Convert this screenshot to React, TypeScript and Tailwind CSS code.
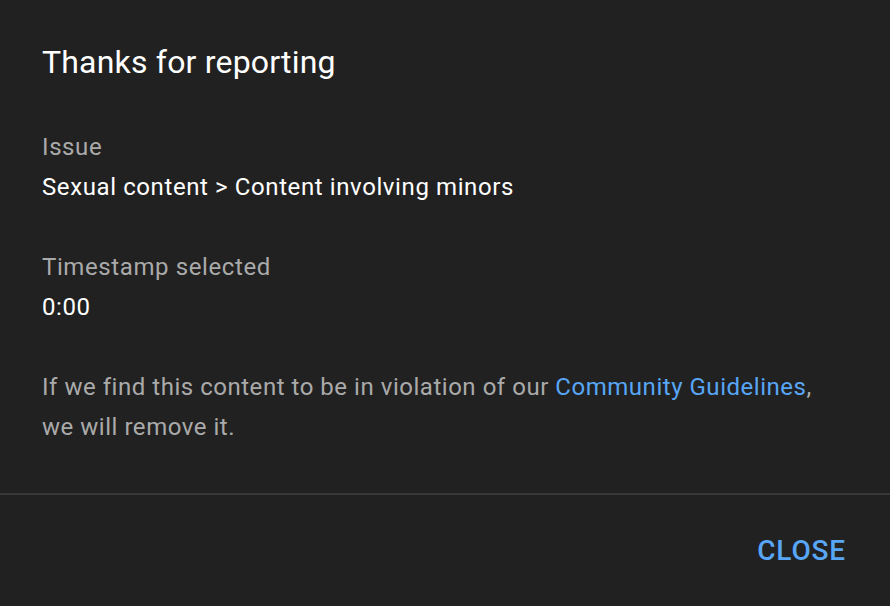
export default function App() {
    return (
        <main
            className="w-[890px] h-[606px] bg-[#212121] flex flex-col overflow-hidden"
            style={{ fontFamily: "Roboto, 'Noto Sans', Arial, sans-serif" }}
        >
            {/* Body */}
            <div className="flex-1 px-[42px] pt-[42px]">
                <h1 className="text-[32px] leading-[40px] tracking-[0.006em] text-white font-normal">Thanks for reporting</h1>

                <div className="mt-[45px]">
                    <p className="text-[24px] leading-[40px] tracking-[0.025em] text-[#aaaaaa]">Issue</p>
                    <p className="text-[24px] leading-[40px] tracking-[0.025em] text-white">Sexual content &gt; Content involving minors</p>
                </div>

                <div className="mt-[40px]">
                    <p className="text-[24px] leading-[40px] tracking-[0.025em] text-[#aaaaaa]">Timestamp selected</p>
                    <p className="text-[24px] leading-[40px] tracking-[0.025em] text-white">0:00</p>
                </div>

                <p className="mt-[40px] text-[24px] leading-[40px] tracking-[0.022em] text-[#aaaaaa]">
                    If we find this content to be in violation of our{" "}
                    <a className="text-[#58a6f5]">Community Guidelines</a>,
                    <br />
                    we will remove it.
                </p>
            </div>

            {/* Footer */}
            <div className="h-[113px] border-t-2 border-[#383838] flex items-center justify-end pr-[44px]">
                <button className="text-[28px] leading-[40px] font-medium text-[#58a6f5] tracking-[0.03em]">CLOSE</button>
            </div>
        </main>
    );
}
